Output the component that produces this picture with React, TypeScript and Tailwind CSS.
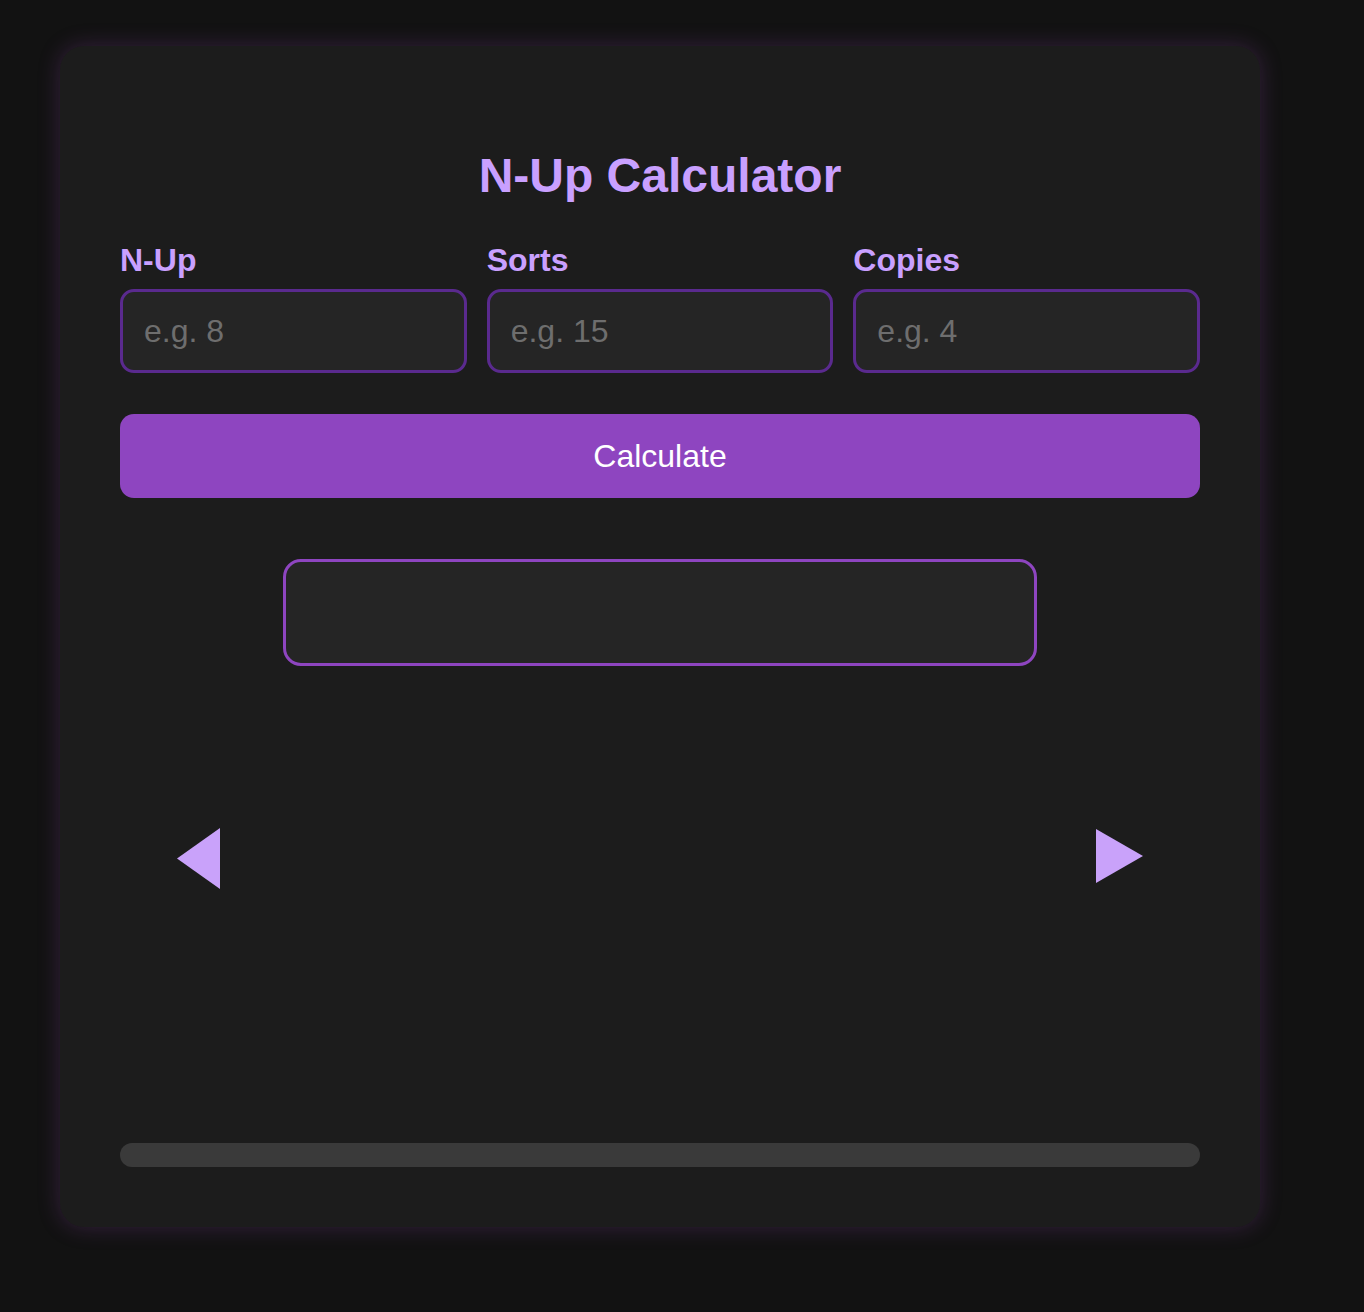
import { useState } from 'react'

function Field({ label, placeholder }: { label: string; placeholder: string }) {
  return (
    <div className="flex flex-col">
      <label className="text-[32px] font-bold leading-[37px] text-[#c9a0ff]">{label}</label>
      <input
        type="number"
        placeholder={placeholder}
        className="mt-[10px] h-[84px] w-full rounded-[14px] border-[3px] border-[#5a2a8e] bg-[#252525] px-[21px] text-[32px] text-white outline-none placeholder:text-[#6e6e6e]"
      />
    </div>
  )
}

export default function App() {
  const [result] = useState('')

  return (
    <main className="min-h-screen bg-[#121212] px-[60px] pt-[46px] pb-[85px] font-['Liberation_Sans',Arial,sans-serif]">
      <div className="w-[1200px] rounded-[24px] bg-[#1c1c1c] px-[60px] pt-[102px] pb-[60px] shadow-[0_0_22px_rgba(142,68,173,0.28)]">
        <h1 className="text-center text-[48px] font-bold leading-[55px] text-[#c9a0ff]">N-Up Calculator</h1>

        <div className="mt-[39px] grid grid-cols-3 gap-x-[20px]">
          <Field label="N-Up" placeholder="e.g. 8" />
          <Field label="Sorts" placeholder="e.g. 15" />
          <Field label="Copies" placeholder="e.g. 4" />
        </div>

        <button className="mt-[41px] h-[84px] w-full rounded-[14px] bg-[#8e45c0] text-[32px] text-white">
          Calculate
        </button>

        <div className="mx-auto mt-[61px] h-[107px] w-[754px] rounded-[18px] border-[3px] border-[#8e45c0] bg-[#252525] text-center text-[32px] text-white">
          {result}
        </div>

        <div className="mt-[42px] flex h-[300px] items-center justify-between px-[57px]">
          <button aria-label="Previous" className="flex h-[61px] w-[43px] items-center">
            <svg width="43" height="61" viewBox="0 0 43 61">
              <polygon points="43,0 43,61 0,30.5" fill="#c9a2fa" />
            </svg>
          </button>
          <button aria-label="Next" className="mb-[4px] flex h-[54px] w-[47px] items-center">
            <svg width="47" height="54" viewBox="0 0 47 54">
              <polygon points="0,0 47,27 0,54" fill="#c9a2fa" />
            </svg>
          </button>
        </div>

        <div className="mt-[135px] h-[24px] w-full rounded-full bg-[#3a3a3a]" />
      </div>
    </main>
  )
}
